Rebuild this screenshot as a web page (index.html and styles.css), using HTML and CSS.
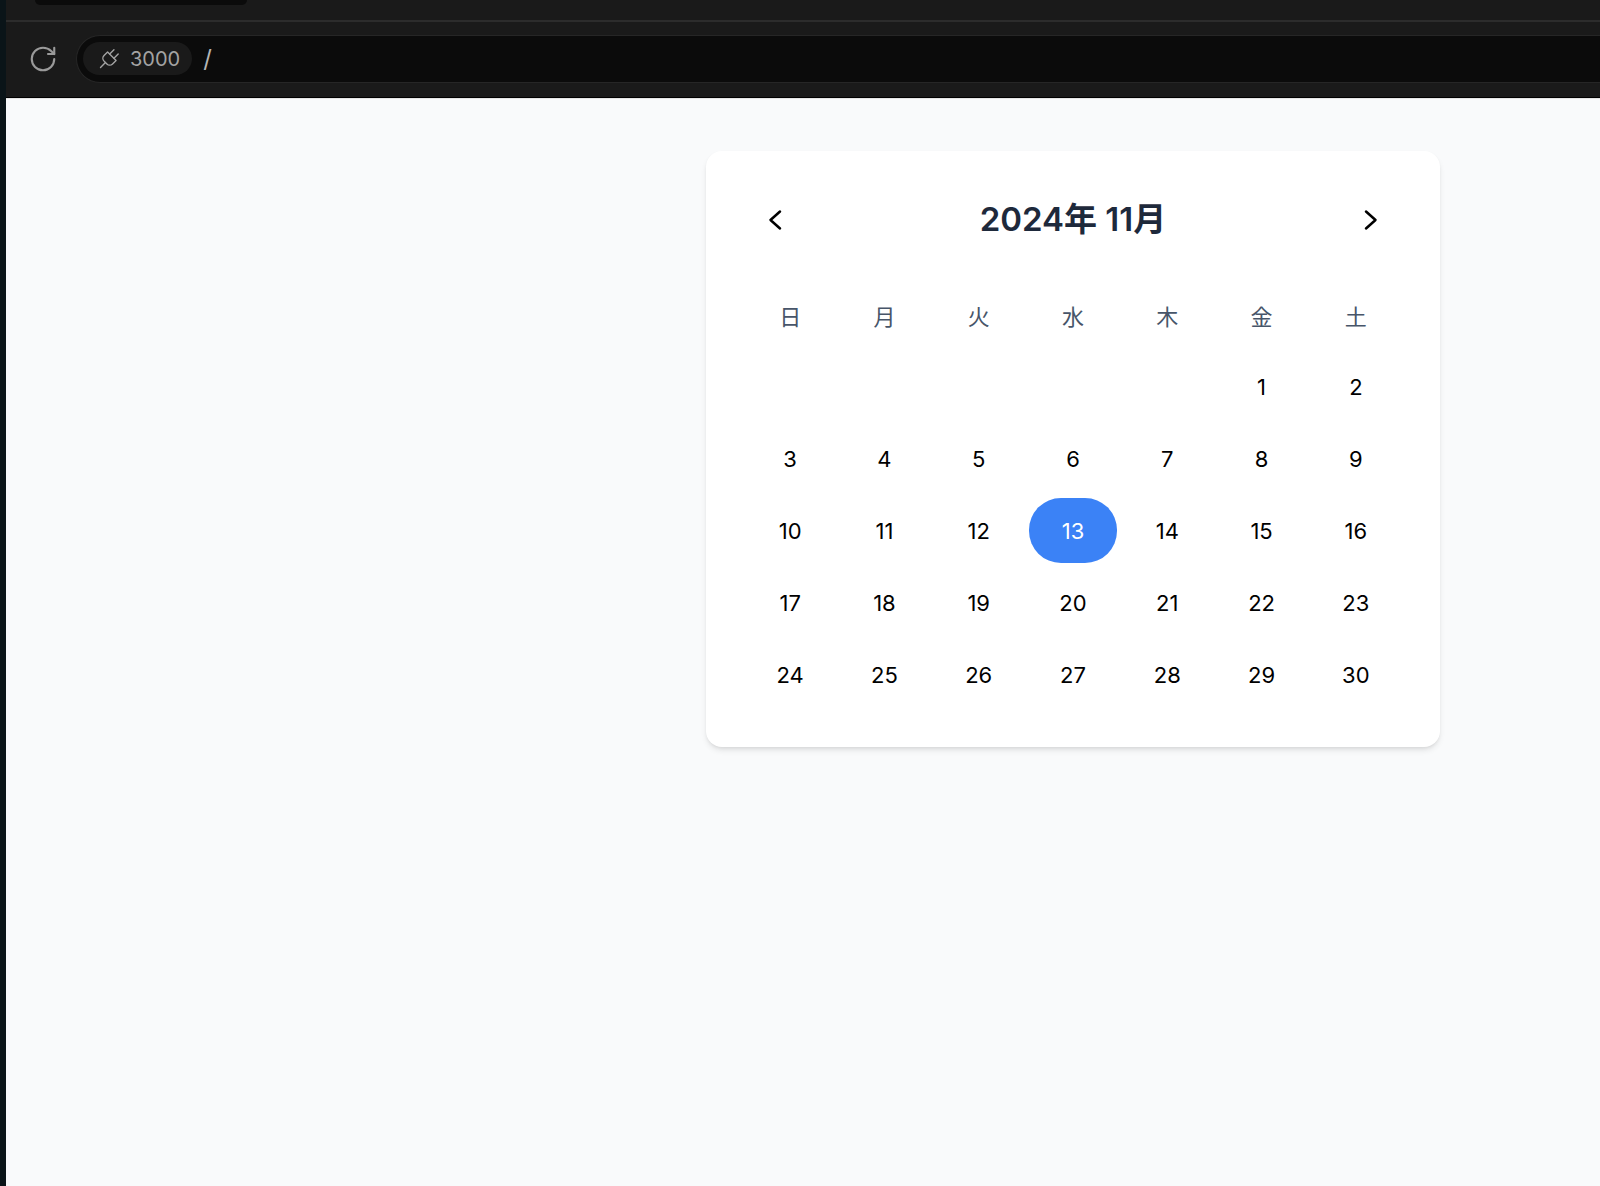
FILE: index.html
```html
<!DOCTYPE html>
<html lang="ja">
<head>
    <meta charset="UTF-8">
    <meta name="viewport" content="width=device-width, initial-scale=1.0">
    <title>Calendar</title>
    <link rel="stylesheet" href="styles.css">
</head>
<body>
    <div class="window">
        <div class="toolbar">
            <div class="tab-strip">
                <div class="tab"></div>
            </div>
            <div class="address-row">
                <svg class="reload" width="30" height="30" viewBox="0 0 24 24" fill="none" stroke="#9a9a9a" stroke-width="1.700" stroke-linecap="round" stroke-linejoin="round">
                    <path d="M21 12a9 9 0 1 1-9-9c2.520 0 4.930 1 6.740 2.740L21 8"/>
                    <path d="M21 3v5h-5"/>
                </svg>
                <div class="address-bar">
                    <div class="port">
                        <svg width="24" height="24" viewBox="0 0 24 24" fill="none" stroke="#a3a3a3" stroke-width="1.400" stroke-linecap="round" stroke-linejoin="round">
                            <g transform="rotate(45 12 12)">
                                <path d="M12 24v-7"/>
                                <path d="M9 8V2"/>
                                <path d="M15 8V2"/>
                                <path d="M18 8v5a4 4 0 0 1-4 4h-4a4 4 0 0 1-4-4V8Z"/>
                            </g>
                        </svg>
                        <span>3000</span>
                    </div>
                    <span class="path">/</span>
                </div>
            </div>
        </div>

        <main class="page">
            <div class="calendar">
                <div class="calendar-header">
                    <button class="nav-btn" aria-label="前の月">
                        <svg width="24" height="24" viewBox="0 0 24 24" fill="none" stroke="#000" stroke-width="2.500" stroke-linecap="round" stroke-linejoin="round"><path d="M17 3.500L7.500 12l9.500 8.500"/></svg>
                    </button>
                    <h2>2024年 11月</h2>
                    <button class="nav-btn" aria-label="次の月">
                        <svg width="24" height="24" viewBox="0 0 24 24" fill="none" stroke="#000" stroke-width="2.500" stroke-linecap="round" stroke-linejoin="round"><path d="M7 3.500l9.500 8.500L7 20.500"/></svg>
                    </button>
                </div>
                <div class="weekdays">
                    <div>日</div><div>月</div><div>火</div><div>水</div><div>木</div><div>金</div><div>土</div>
                </div>
                <div class="days">
                    <div></div><div></div><div></div><div></div><div></div>
                    <div>1</div><div>2</div>
                    <div>3</div><div>4</div><div>5</div><div>6</div><div>7</div><div>8</div><div>9</div>
                    <div>10</div><div>11</div><div>12</div><div class="today">13</div><div>14</div><div>15</div><div>16</div>
                    <div>17</div><div>18</div><div>19</div><div>20</div><div>21</div><div>22</div><div>23</div>
                    <div>24</div><div>25</div><div>26</div><div>27</div><div>28</div><div>29</div><div>30</div>
                </div>
            </div>
        </main>
    </div>
</body>
</html>
```

FILE: styles.css
```css
html, body {
    margin: 0;
    height: 100%;
}
body {
    font-family: Inter, "Noto Sans CJK JP", sans-serif;
    background-color: #0a1418;
    overflow: hidden;
}
.window {
    margin-left: 6px;
    height: 100%;
    display: flex;
    flex-direction: column;
}
.toolbar {
    background-color: #1a1a1a;
    border-bottom: 1px solid #000;
}
.tab-strip {
    height: 20px;
    padding-left: 29px;
    border-bottom: 2px solid #2c2c2c;
}
.tab {
    width: 212px;
    height: 5px;
    background-color: #0b0b0b;
    border-radius: 0 0 12px 12px;
}
.address-row {
    height: 73px;
    display: flex;
    align-items: center;
    padding: 0 0 2px 22px;
    gap: 18px;
}
.reload {
    flex: none;
}
.address-bar {
    flex: 1;
    height: 46px;
    display: flex;
    align-items: center;
    gap: 11px;
    padding-left: 6px;
    background-color: #0b0b0b;
    border: 1px solid #262626;
    border-right: none;
    border-radius: 24px 0 0 24px;
}
.port {
    height: 33px;
    display: flex;
    align-items: center;
    gap: 9px;
    padding: 0 12px 0 14px;
    background-color: #1a1a1a;
    border-radius: 17px;
    color: #a3a3a3;
    font-size: 20px;
}
.path {
    color: #b5b5b5;
    font-size: 24px;
}
.page {
    flex: 1;
    background-color: #f9fafb;
    border-top: 1px solid #e5e5e5;
    padding: 52px 0 0 700px;
}
.calendar {
    width: 734px;
    box-sizing: border-box;
    padding: 40px;
    background: white;
    border-radius: 16px;
    box-shadow: 0 4px 6px -1px rgba(0,0,0,0.1), 0 2px 4px -2px rgba(0,0,0,0.1);
}
.calendar-header {
    display: flex;
    align-items: center;
    justify-content: space-between;
    height: 58px;
    padding: 0 17px;
    margin-bottom: 50px;
}
.calendar-header h2 {
    margin: 0 0 6px;
    font-size: 33px;
    font-weight: 600;
    color: #1e293b;
}
.nav-btn {
    display: flex;
    padding: 0;
    border: none;
    background: none;
    cursor: pointer;
}
.weekdays, .days {
    display: grid;
    grid-template-columns: repeat(7, 1fr);
    column-gap: 6px;
    text-align: center;
}
.weekdays {
    height: 36px;
    line-height: 36px;
    margin-bottom: 19px;
    font-size: 22px;
    color: #475569;
}
.days {
    grid-auto-rows: 65px;
    row-gap: 7px;
    font-size: 22px;
    color: #000;
}
.days div {
    display: flex;
    align-items: center;
    justify-content: center;
    border-radius: 32px;
}
.days .today {
    background-color: #3b82f6;
    color: white;
}
```
